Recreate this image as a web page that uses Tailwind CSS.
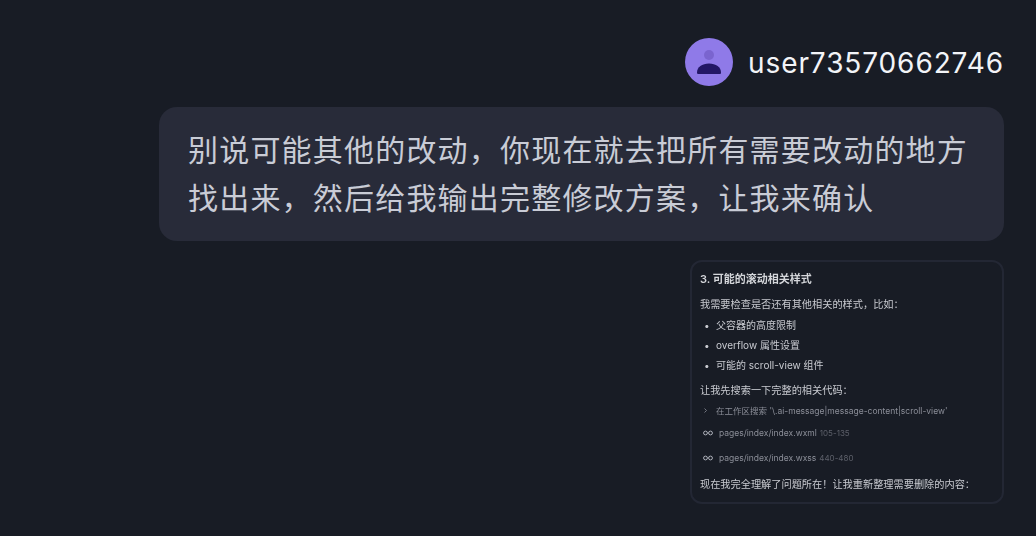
<!DOCTYPE html>
<html lang="zh">
<head>
    <meta charset="UTF-8">
    <title>Chat</title>
    <script src="https://cdn.jsdelivr.net/npm/@tailwindcss/browser@4"></script>
</head>
<body class="bg-[#181c25] h-[536px] w-[1036px] overflow-hidden font-['Inter','Noto_Sans_CJK_SC',sans-serif]">
    <div class="flex flex-col items-end pt-[38px] pr-[32px]">
        <div class="flex items-center gap-[15px] h-[48px]">
            <div class="w-[48px] h-[48px] rounded-full bg-[#8f7ae8] flex items-center justify-center">
                <svg width="48" height="48" viewBox="0 0 48 48">
                    <circle cx="24" cy="17" r="5" fill="#7a64cf"/>
                    <path d="M12 34.500c0-5.500 5-9 12-9s12 3.500 12 9c0 1-.5 1.500-1.500 1.500h-21c-1 0-1.500-.5-1.500-1.500z" fill="#231766"/>
                </svg>
            </div>
            <span class="pt-[2px] text-[28px] leading-[48px] text-[#f2f4f8] tracking-[0.9px]">user73570662746</span>
        </div>
        <div class="mt-[21px] w-[845px] h-[134px] rounded-[18px] bg-[#282b39] pl-[29px] pt-[17px] text-[30px] leading-[48px] tracking-[1.2px] text-[#c9ccd6] font-['Noto_Sans_CJK_SC',sans-serif]">
            <p>别说可能其他的改动，你现在就去把所有需要改动的地方</p>
            <p>找出来，然后给我输出完整修改方案，让我来确认</p>
        </div>
        <div class="mt-[19px] w-[314px] h-[244px] rounded-[12px] border-2 border-[#232734] pl-[8px] pt-[7px] text-[10.200px] text-[#c8cad0] blur-[0.5px]">
            <p class="h-[20px] leading-[20px] text-[11px] font-semibold text-[#d4d6da]">3. 可能的滚动相关样式</p>
            <p class="mt-[5px] h-[20px] leading-[20px]">我需要检查是否还有其他相关的样式，比如：</p>
            <ul class="mt-[1px]">
                <li class="flex h-[20px] leading-[20px] text-[10px]"><span class="w-[16px] pl-[4px]">•</span>父容器的高度限制</li>
                <li class="flex h-[20px] leading-[20px] text-[10px]"><span class="w-[16px] pl-[4px]">•</span>overflow 属性设置</li>
                <li class="flex h-[20px] leading-[20px] text-[10px]"><span class="w-[16px] pl-[4px]">•</span>可能的 scroll-view 组件</li>
            </ul>
            <p class="mt-[5px] h-[20px] leading-[20px]">让我先搜索一下完整的相关代码：</p>
            <div class="flex items-center h-[20px] mt-[1px] text-[#8b8e98] text-[8.500px]">
                <svg class="mr-[-2px]" width="18" height="8" viewBox="0 0 18 8"><path d="M4.500 1.500l2 2-2 2" fill="none" stroke="#8b8e98" stroke-width="0.8"/></svg>
                <span>在工作区搜索 '\.ai-message|message-content|scroll-view'</span>
            </div>
            <div class="flex items-center h-[24px] text-[#8b8e98] text-[8.500px]">
                <svg class="mr-[6px] ml-[3px]" width="10" height="6" viewBox="0 0 10 6"><circle cx="2.500" cy="3" r="1.900" fill="none" stroke="#b0b3bc" stroke-width="1"/><circle cx="7.500" cy="3" r="1.900" fill="none" stroke="#b0b3bc" stroke-width="1"/></svg>
                <span>pages/index/index.wxml</span><span class="ml-[3px] text-[8px] text-[#5d606a]">105-135</span>
            </div>
            <div class="flex items-center h-[24px] mt-[1px] text-[#8b8e98] text-[8.500px]">
                <svg class="mr-[6px] ml-[3px]" width="10" height="6" viewBox="0 0 10 6"><circle cx="2.500" cy="3" r="1.900" fill="none" stroke="#b0b3bc" stroke-width="1"/><circle cx="7.500" cy="3" r="1.900" fill="none" stroke="#b0b3bc" stroke-width="1"/></svg>
                <span>pages/index/index.wxss</span><span class="ml-[3px] text-[8px] text-[#5d606a]">440-480</span>
            </div>
            <p class="mt-[4px] h-[20px] leading-[20px]">现在我完全理解了问题所在！让我重新整理需要删除的内容：</p>
        </div>
    </div>
</body>
</html>
